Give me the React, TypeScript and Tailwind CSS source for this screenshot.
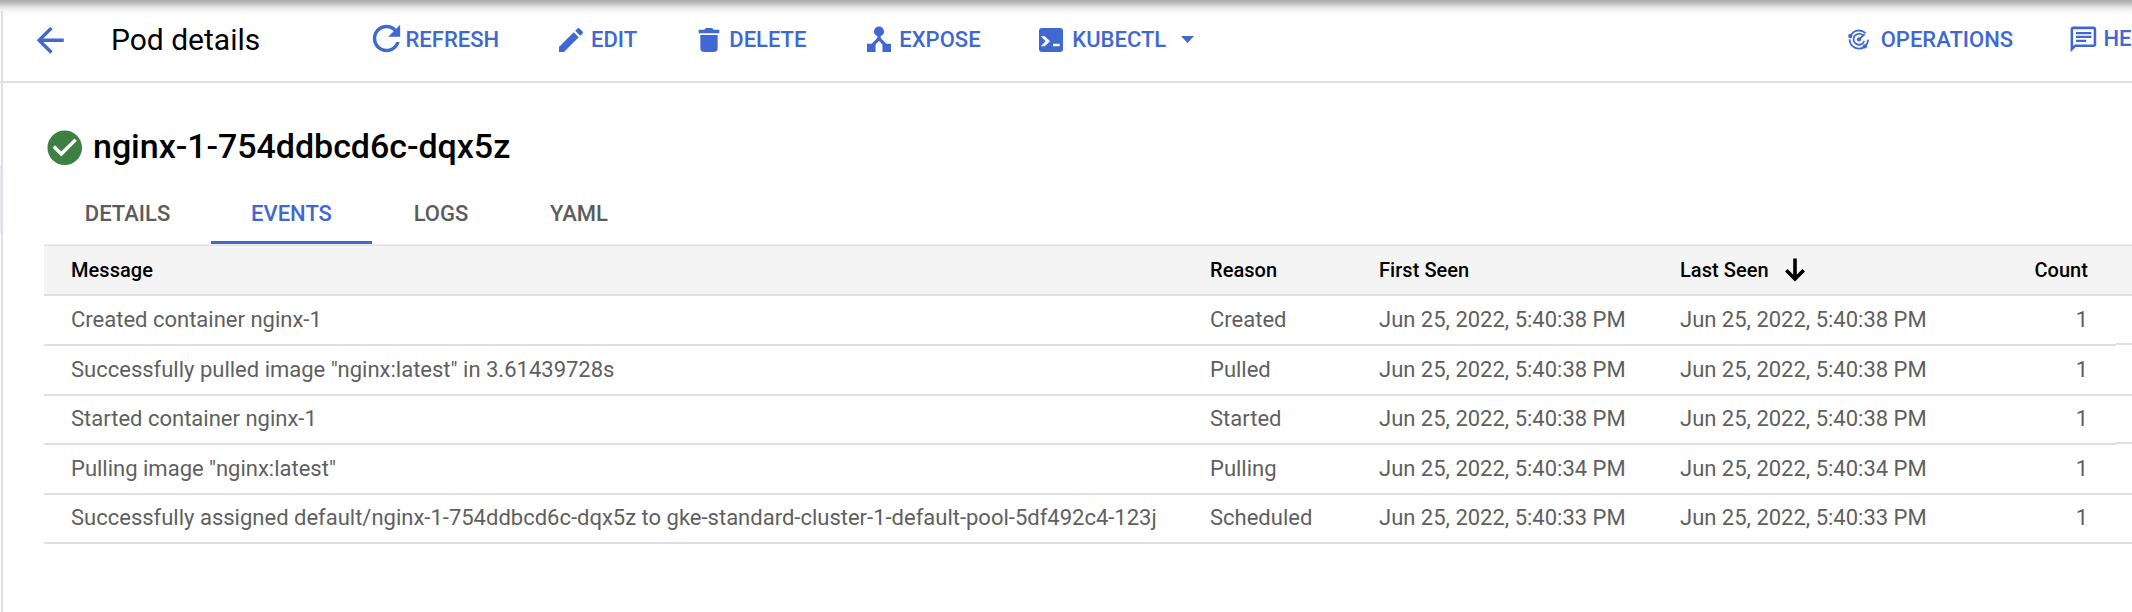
import React from "react";

type IconProps = { className: string };

const BackIcon = ({ className }: IconProps) => (
  <svg viewBox="0 0 24 24" fill="currentColor" className={className}>
    <path d="M20 11H7.83l5.59-5.59L12 4l-8 8 8 8 1.41-1.41L7.83 13H20v-2z" />
  </svg>
);

const RefreshIcon = ({ className }: IconProps) => (
  <svg viewBox="0 0 24 24" fill="currentColor" className={className}>
    <path d="M17.65 6.35C16.2 4.9 14.21 4 12 4c-4.42 0-7.99 3.58-7.99 8s3.57 8 7.99 8c3.73 0 6.84-2.55 7.73-6h-2.08c-.82 2.33-3.04 4-5.65 4-3.31 0-6-2.69-6-6s2.69-6 6-6c1.66 0 3.14.69 4.22 1.78L13 11h7V4l-2.35 2.35z" />
  </svg>
);

const EditIcon = ({ className }: IconProps) => (
  <svg viewBox="0 0 24 24" fill="currentColor" className={className}>
    <path d="M3 17.25V21h3.75L17.81 9.94l-3.75-3.75L3 17.25zM20.71 7.04c.39-.39.39-1.02 0-1.41l-2.34-2.34c-.39-.39-1.02-.39-1.41 0l-1.83 1.83 3.75 3.75 1.83-1.83z" />
  </svg>
);

const DeleteIcon = ({ className }: IconProps) => (
  <svg viewBox="0 0 24 24" fill="currentColor" className={className}>
    <path d="M4.25 4.25H8.5L9.75 3h4.5l1.25 1.25h4.25V7H4.25V4.25z" />
    <path d="M5.5 8.25h13V18a3 3 0 0 1-3 3h-7a3 3 0 0 1-3-3V8.25z" />
  </svg>
);

const ExposeIcon = ({ className }: IconProps) => (
  <svg viewBox="0 0 24 24" fill="currentColor" className={className}>
    <circle cx="12" cy="5.6" r="3.8" />
    <path d="M3 14.8h6.4V21H3zM14.6 14.8H21V21h-6.4z" />
    <path d="M12 8v3.6M12 11l-5 5M12 11l5 5" fill="none" stroke="currentColor" strokeWidth="2.5" />
  </svg>
);

const TerminalIcon = ({ className }: IconProps) => (
  <svg viewBox="0 0 24 24" fill="currentColor" className={className}>
    <rect x="3" y="3" width="18" height="18" rx="2.2" />
    <path d="M4.400 9.250h2.900L11.300 13l-4 3.750H4.400L8 13zM13.500 14.750h5v2h-5z" fill="white" />
  </svg>
);

const OperationsIcon = ({ className }: IconProps) => (
  <svg viewBox="0 0 64 62" fill="none" stroke="currentColor" strokeWidth="5.4" className={className}>
    <path d="M8 21A27 27 0 0 1 52 12.500" />
    <path d="M4.500 31A28.500 28.500 0 0 0 50 53" />
    <path d="M51 51A27 27 0 0 0 60.500 32" />
    <path d="M43.500 18A16.500 16.500 0 1 0 48.500 36" />
    <path d="M33 31L50 15" />
    <circle cx="7" cy="21" r="6.500" fill="currentColor" stroke="none" />
    <circle cx="50.500" cy="52" r="6.500" fill="currentColor" stroke="none" />
    <circle cx="33" cy="31" r="6.500" fill="currentColor" stroke="none" />
  </svg>
);

const ChatIcon = ({ className }: IconProps) => (
  <svg viewBox="0 0 24 24" fill="currentColor" className={className}>
    <path d="M4 4h16v12H5.170L4 17.170V4m0-2c-1.100 0-1.990.9-1.990 2L2 22l4-4h14c1.100 0 2-.9 2-2V4c0-1.100-.9-2-2-2H4z" />
    <path d="M6.200 6.200h12v1.700h-12zM6.200 9.200h12v1.700h-12zM6.200 12.300h8v1.700h-8z" />
  </svg>
);

const CheckIcon = ({ className }: IconProps) => (
  <svg viewBox="0 0 24 24" fill="currentColor" className={className}>
    <path d="M12 2C6.48 2 2 6.48 2 12s4.480 10 10 10 10-4.480 10-10S17.520 2 12 2zm-2 15l-5-5 1.410-1.410L10 14.170l7.590-7.590L19 8l-9 9z" />
  </svg>
);

const SortIcon = ({ className }: IconProps) => (
  <svg viewBox="0 0 20 24" fill="none" stroke="currentColor" strokeWidth="3.6" className={className}>
    <path d="M10 0.500v20M1.300 12.300L10 21l8.700-8.700" />
  </svg>
);

const events = [
  { message: "Created container nginx-1", reason: "Created", time: "Jun 25, 2022, 5:40:38 PM" },
  { message: 'Successfully pulled image "nginx:latest" in 3.61439728s', reason: "Pulled", time: "Jun 25, 2022, 5:40:38 PM" },
  { message: "Started container nginx-1", reason: "Started", time: "Jun 25, 2022, 5:40:38 PM" },
  { message: 'Pulling image "nginx:latest"', reason: "Pulling", time: "Jun 25, 2022, 5:40:34 PM" },
  {
    message: "Successfully assigned default/nginx-1-754ddbcd6c-dqx5z to gke-standard-cluster-1-default-pool-5df492c4-123j",
    reason: "Scheduled",
    time: "Jun 25, 2022, 5:40:33 PM",
  },
];

const Toolbar = () => (
  <header className="flex h-[83px] shrink-0 items-center overflow-hidden whitespace-nowrap border-b-2 border-[#e0e0e0] bg-[linear-gradient(to_bottom,#aaaaaa_0px,#bebebe_3px,#e2e2e2_7px,#f7f7f7_11px,#ffffff_15px)] pb-[2px] text-[22px] font-medium leading-none text-[#3f68d2]">
    <span className="-mb-[2px] mr-[27px] h-[70px] w-[3px] shrink-0 self-end border-r-2 border-[#e0e0e0]" />
    <BackIcon className="mt-[1px] size-[40.5px] shrink-0" />
    <h1 className="ml-[40.5px] w-[255px] shrink-0 text-[30px] font-normal text-black">Pod details</h1>
    <button className="flex w-[189px] shrink-0 items-center">
      <RefreshIcon className="-mt-[2px] size-[41px] shrink-0" />
      <span className="-ml-[1.5px]">REFRESH</span>
    </button>
    <button className="flex w-[138.3px] shrink-0 items-center gap-1">
      <EditIcon className="size-8 shrink-0" />
      EDIT
    </button>
    <button className="flex w-[170px] shrink-0 items-center gap-1">
      <DeleteIcon className="size-8 shrink-0" />
      DELETE
    </button>
    <button className="flex w-[172px] shrink-0 items-center gap-1">
      <ExposeIcon className="size-8 shrink-0" />
      EXPOSE
    </button>
    <button className="flex w-[813px] shrink-0 items-center gap-[5px]">
      <TerminalIcon className="size-8 shrink-0" />
      KUBECTL
      <svg viewBox="0 0 13 7" fill="currentColor" className="ml-[10px] h-[7px] w-[13px]">
        <path d="M0 0h13L6.500 7z" />
      </svg>
    </button>
    <button className="flex w-[219.4px] shrink-0 items-center">
      <OperationsIcon className="h-[20.7px] w-[21.4px] shrink-0" />
      <span className="ml-[11px]">OPERATIONS</span>
    </button>
    <button className="flex shrink-0 items-center gap-[5px]">
      <ChatIcon className="size-[30.8px] shrink-0" />
      HE
    </button>
  </header>
);

const columns = "grid grid-cols-[1166px_169px_301px_408px_28px_16px] whitespace-nowrap";

export default function App() {
  return (
    <div className="flex h-[612px] w-[2132px] flex-col overflow-hidden bg-white font-['Roboto',sans-serif]">
      <Toolbar />
      <div className="flex flex-1">
        <div className="flex w-[3px] shrink-0 flex-col border-r-2 border-[#e0e0e0] pt-[82px]">
          <div className="h-[68px] bg-[#e8ecfb]" />
        </div>
        <main className="flex flex-1 flex-col pl-[41px]">
          <div className="flex h-[130px] items-center">
            <CheckIcon className="-ml-[0.5px] size-[41.5px] shrink-0 text-[#3d8043]" />
            <h2 className="-mt-[4px] ml-[8px] text-[34px] font-medium leading-none tracking-[-0.04px] text-black">nginx-1-754ddbcd6c-dqx5z</h2>
          </div>
          <nav className="-mt-[30px] flex h-[61px] text-[22px] font-medium leading-none text-[#5c5c5c]">
            <a className="flex w-[167px] items-center justify-center border-b-[3px] border-transparent pt-[3px]">DETAILS</a>
            <a className="flex w-[161px] items-center justify-center border-b-[3px] border-[#3f68d2] pt-[3px] text-[#3f68d2]">EVENTS</a>
            <a className="flex w-[138px] items-center justify-center border-b-[3px] border-transparent pt-[3px]">LOGS</a>
            <a className="flex w-[138px] items-center justify-center border-b-[3px] border-transparent pt-[3px]">YAML</a>
          </nav>
          <section className="border-t border-[#eeeeee]">
            <div className={`${columns} h-[51px] items-center border-b-2 border-t border-[#e0e0e0] bg-[#f4f4f4] text-[20px] font-medium leading-none tracking-[0.05px] text-black`}>
              <div className="pl-[27px]">Message</div>
              <div>Reason</div>
              <div>First Seen</div>
              <div className="flex items-center gap-[16.5px]">
                Last Seen
                <SortIcon className="h-6 w-5" />
              </div>
              <div className="-ml-[60px] pr-[28px] text-right">Count</div>
            </div>
            {events.map((event, i) => (
              <div key={event.message} className={`${columns} ${i % 2 ? "h-[49px]" : "h-[50px]"} text-[22px] leading-[48px] text-[#5f5f5f] *:border-b-2 *:border-[#e0e0e0]`}>
                <div className="pl-[27px]">{event.message}</div>
                <div>{event.reason}</div>
                <div>{event.time}</div>
                <div className="col-span-2 flex justify-between pr-[28px]">
                  <span>{event.time}</span>
                  <span>1</span>
                </div>
                <div className={i === 0 || i === 2 ? "h-[49px]" : "h-full"} />
              </div>
            ))}
          </section>
        </main>
      </div>
    </div>
  );
}
